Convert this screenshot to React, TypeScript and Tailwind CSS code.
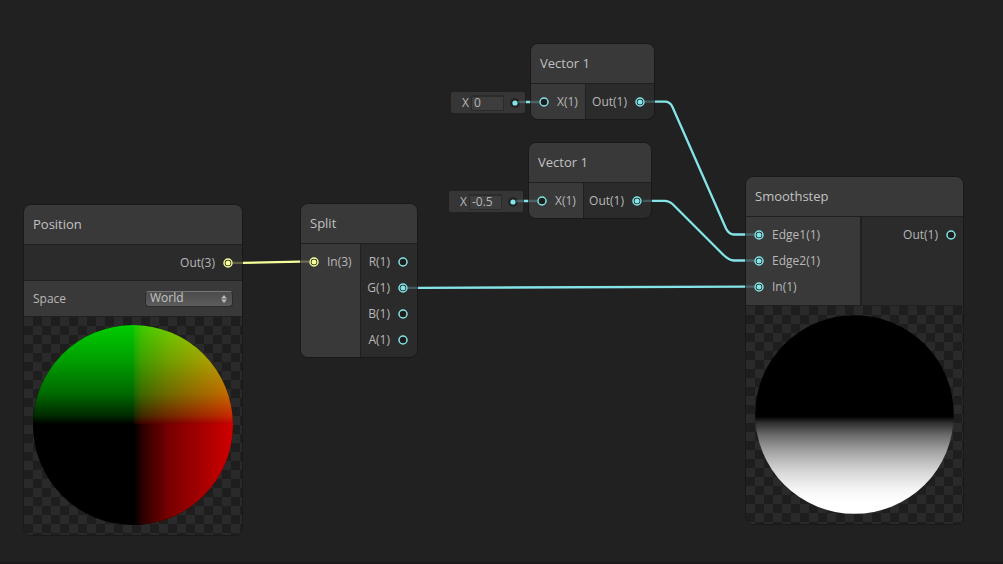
import type { ReactNode } from 'react';

type Tone = 'cyan' | 'yellow';

function Port({ tone = 'cyan', filled = false }: { tone?: Tone; filled?: boolean }) {
  const color = tone === 'cyan' ? '#84e4e7' : '#f6ff9a';
  return (
    <svg className="size-3 shrink-0" viewBox="0 0 12 12" aria-hidden="true">
      <circle cx="6" cy="6" r="4" fill="#1c1c1c" stroke={color} strokeWidth="1.5" />
      {filled && <circle cx="6" cy="6" r="2.5" fill={color} />}
    </svg>
  );
}

function InRow({ label, ...port }: { label: string; tone?: Tone; filled?: boolean }) {
  return (
    <div className="flex h-[26px] items-center gap-[7px] pl-[7px]">
      <Port {...port} />
      <span>{label}</span>
    </div>
  );
}

function OutRow({ label, ...port }: { label: string; tone?: Tone; filled?: boolean }) {
  return (
    <div className="flex h-[26px] items-center justify-end gap-[7px]">
      <span>{label}</span>
      <Port {...port} />
    </div>
  );
}

function Node({ title, place, children }: { title: string; place: string; children: ReactNode }) {
  return (
    <section className={`absolute overflow-hidden rounded-lg border border-[#191919] bg-[#2b2b2b] ${place}`}>
      <h2 className="flex h-10 items-center border-b border-[#202020] bg-[#393939] px-[9px] text-[13px] text-[#c1c1c1]">
        {title}
      </h2>
      {children}
    </section>
  );
}

function Preview({ children }: { children: ReactNode }) {
  return (
    <div className="flex h-[218px] justify-center bg-[repeating-conic-gradient(#1e1e1e_0_25%,#2a2a2a_0_50%)] bg-size-[18px_18px] pt-[7px]">
      {children}
    </div>
  );
}

function ValueField({ value, place, name }: { value: string; place: string; name: string }) {
  return (
    <div className={`absolute flex h-[21px] w-[74px] items-center rounded-xs bg-[#363636] pl-[11px] ${place}`}>
      <label className="flex items-center gap-0.5">
        X
        <input
          aria-label={name}
          defaultValue={value}
          className="h-4 w-[33px] border border-t-2 border-[#2b2b2b] bg-[#3d3d3d] pl-0.5 text-xs outline-none"
        />
      </label>
      <svg className="ml-1.5 size-[10px]" viewBox="0 0 10 10" aria-hidden="true">
        <circle cx="5" cy="5" r="4.8" fill="#212121" />
        <circle cx="5" cy="5" r="2.6" fill="#84e4e7" />
      </svg>
    </div>
  );
}

function Edges() {
  return (
    <svg className="pointer-events-none absolute left-0 top-0 h-[564px] w-[1003px]" viewBox="0 0 1003 564" fill="none" strokeWidth="2.3" aria-hidden="true">
      <g stroke="#84e4e7">
        <path d="M655 101.700H665Q670 101.700 672.500 107L726 228.500Q729 234.500 734 234.500H745" />
        <path d="M652 200.800H665Q669 200.800 672.500 204L723 254.500Q729 260.500 734 260.500H745" />
        <path d="M418 287.800L745 286.700" />
        <path d="M526 102H530M524 201H528" />
      </g>
      <path d="M243 262.800L300 261.600" stroke="#f6ff9a" />
      <g stroke="#84e4e7" strokeOpacity="0.25">
        <path d="M645 101.700H655M643 200.800H652M745 234.500H754M745 260.500H754M745 286.700H754M408 287.800H418" />
        <path d="M518 102H526M530 102H539M516 201H524M528 201H537" />
      </g>
      <path d="M233 262.800H243M300 261.600H309" stroke="#f6ff9a" strokeOpacity="0.25" />
    </svg>
  );
}

function PositionSphere() {
  return (
    <svg className="size-[202px]" viewBox="0 0 202 202" role="img" aria-label="Position preview">
      <defs>
        <clipPath id="ball"><circle cx="101" cy="101" r="100" /></clipPath>
        <linearGradient id="green" x1="0" y1="0" x2="0" y2="1">
          <stop offset="0" stopColor="#00cc00" />
          <stop offset="0.35" stopColor="#00a000" />
          <stop offset="0.7" stopColor="#006800" />
          <stop offset="0.92" stopColor="#002800" />
          <stop offset="1" stopColor="#000000" />
        </linearGradient>
        <linearGradient id="red">
          <stop offset="0" stopColor="#000000" />
          <stop offset="0.1" stopColor="#300000" />
          <stop offset="0.35" stopColor="#780000" />
          <stop offset="0.7" stopColor="#a80000" />
          <stop offset="1" stopColor="#d00000" />
        </linearGradient>
        <linearGradient id="redTop">
          <stop offset="0" stopColor="#180000" />
          <stop offset="0.08" stopColor="#400000" />
          <stop offset="0.35" stopColor="#700000" />
          <stop offset="0.7" stopColor="#a00000" />
          <stop offset="1" stopColor="#c80000" />
        </linearGradient>
      </defs>
      <g clipPath="url(#ball)">
        <rect width="202" height="202" fill="#000" />
        <rect y="1" width="102" height="99" fill="url(#green)" />
        <rect x="102" y="99" width="99" height="103" fill="url(#red)" />
        <g className="isolate">
          <rect x="102" y="1" width="99" height="99" fill="url(#green)" />
          <rect className="mix-blend-screen" x="102" y="1" width="99" height="99" fill="url(#redTop)" />
        </g>
      </g>
    </svg>
  );
}

function StepSphere() {
  return (
    <svg className="size-[202px]" viewBox="0 0 202 202" role="img" aria-label="Smoothstep preview">
      <defs>
        <linearGradient id="step" x1="0" y1="0" x2="0" y2="1">
          <stop offset="0" stopColor="#000000" />
          <stop offset="0.51" stopColor="#000000" />
          <stop offset="0.54" stopColor="#2c2c2c" />
          <stop offset="0.6" stopColor="#686868" />
          <stop offset="0.68" stopColor="#a0a0a0" />
          <stop offset="0.78" stopColor="#d4d4d4" />
          <stop offset="0.88" stopColor="#f6f6f6" />
          <stop offset="0.94" stopColor="#ffffff" />
        </linearGradient>
      </defs>
      <circle cx="100.500" cy="101.500" r="99.300" fill="url(#step)" />
    </svg>
  );
}

function VectorNode({ place }: { place: string }) {
  return (
    <Node title="Vector 1" place={place}>
      <div className="grid grid-cols-[55px_1fr]">
        <div className="border-r border-[#202020] bg-[#393939] pb-1 pt-[5px]">
          <InRow label="X(1)" />
        </div>
        <div className="pb-1 pr-2 pt-[5px]">
          <OutRow label="Out(1)" filled />
        </div>
      </div>
    </Node>
  );
}

export default function App() {
  return (
    <main className="relative min-h-screen overflow-hidden border-b-2 border-[#1e191b] bg-[#212121] font-['Open_Sans','Noto_Sans',sans-serif] text-xs text-[#b8b8b8]">
      <Node title="Position" place="left-[23px] top-[204px] w-[220px]">
        <div className="flex h-9 flex-col justify-center border-b border-[#202020] pr-2">
          <OutRow label="Out(3)" tone="yellow" filled />
        </div>
        <div className="flex h-9 items-center justify-between border-b border-[#202020] bg-[#393939] px-[9px]">
          <label htmlFor="space">Space</label>
          <div className="relative">
            <select
              id="space"
              className="block h-4 w-[88px] appearance-none rounded-sm border border-[#2b2b2b] border-t-[#777777] bg-linear-to-b from-[#4b4b4b] to-[#5c5c5c] pb-0.5 pl-1 text-xs leading-3 text-[#c4c4c4] outline-none"
            >
              <option>World</option>
              <option>Object</option>
              <option>View</option>
              <option>Tangent</option>
            </select>
            <svg className="pointer-events-none absolute right-1.5 top-1 h-2 w-1.5" viewBox="0 0 6 8" fill="#bcbcbc" aria-hidden="true">
              <path d="M3 0L5.800 3.500H.2ZM3 8L5.800 4.500H.2Z" />
            </svg>
          </div>
        </div>
        <Preview><PositionSphere /></Preview>
      </Node>

      <Node title="Split" place="left-[300px] top-[203px] w-[118px]">
        <div className="grid grid-cols-[60px_1fr]">
          <div className="border-r border-[#202020] bg-[#393939] pt-[5px]">
            <InRow label="In(3)" tone="yellow" filled />
          </div>
          <div className="pb-1 pr-2 pt-[5px]">
            <OutRow label="R(1)" />
            <OutRow label="G(1)" filled />
            <OutRow label="B(1)" />
            <OutRow label="A(1)" />
          </div>
        </div>
      </Node>

      <ValueField name="First vector X" value="0" place="left-[451px] top-[92px]" />
      <VectorNode place="left-[530px] top-[43px] w-[125px]" />

      <ValueField name="Second vector X" value="-0.5" place="left-[449px] top-[191px]" />
      <VectorNode place="left-[528px] top-[142px] w-[124px]" />

      <Node title="Smoothstep" place="left-[745px] top-[176px] w-[219px]">
        <div className="grid grid-cols-[116px_1fr] border-b border-[#202020]">
          <div className="border-r-2 border-[#202020] bg-[#393939] py-[5px]">
            <InRow label="Edge1(1)" filled />
            <InRow label="Edge2(1)" filled />
            <InRow label="In(1)" filled />
          </div>
          <div className="py-[5px] pr-1.5">
            <OutRow label="Out(1)" />
          </div>
        </div>
        <Preview><StepSphere /></Preview>
      </Node>

      <Edges />
    </main>
  );
}
